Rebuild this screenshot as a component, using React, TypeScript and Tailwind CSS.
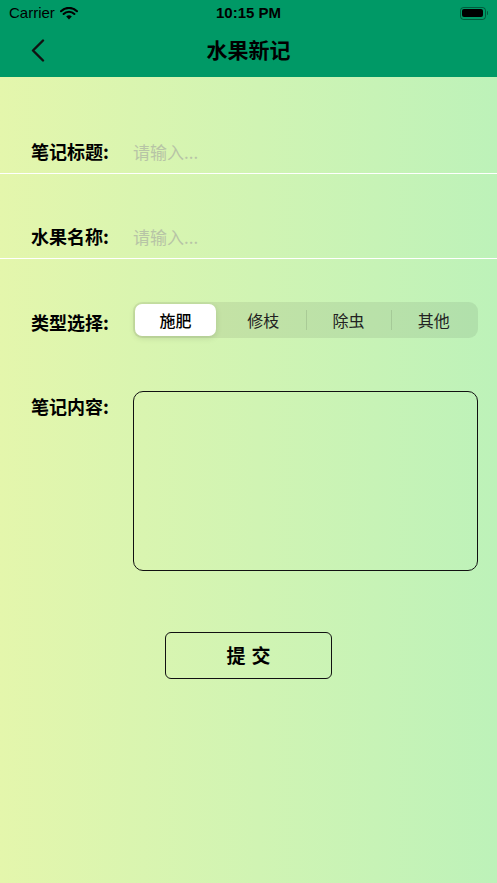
import { useState } from "react";

const types = ["施肥", "修枝", "除虫", "其他"];

function StatusBar() {
  return (
    <div className="relative flex h-[26px] items-center px-[9px] text-[15px] text-black">
      <div className="flex items-center gap-[5px]">
        <span className="font-['Liberation_Sans',sans-serif]">Carrier</span>
        <svg width="18" height="13" viewBox="0 0 18 13">
          <path d="M9 12.5 L6.2 9.6 A4 4 0 0 1 11.8 9.6 Z" fill="#000" />
          <path d="M3.6 7 A7.6 7.6 0 0 1 14.4 7" stroke="#000" strokeWidth="2.1" fill="none" strokeLinecap="round" />
          <path d="M1 4.2 A11.3 11.3 0 0 1 17 4.2" stroke="#000" strokeWidth="2.1" fill="none" strokeLinecap="round" />
        </svg>
      </div>
      <span className="absolute left-1/2 -translate-x-1/2 font-['Liberation_Sans',sans-serif] font-semibold">
        10:15 PM
      </span>
      <div className="ml-auto flex items-center gap-[1px]">
        <div className="flex h-[13px] w-[26px] items-center rounded-[3.5px] border border-black/40 p-[1.5px]">
          <div className="h-full w-full rounded-[2px] bg-black" />
        </div>
        <div className="h-[4px] w-[1.5px] rounded-r-sm bg-black/40" />
      </div>
    </div>
  );
}

export default function App() {
  const [active, setActive] = useState(0);

  return (
    <div className="min-h-screen w-full bg-linear-to-r from-[#e4f6ac] to-[#bdf2b9] font-['Noto_Sans_CJK_SC','Noto_Sans',sans-serif] text-black">
      <div className="relative h-[77px] bg-[#009966]">
        <StatusBar />
        <div className="flex h-[47px] items-center justify-center">
          <h1 className="text-[21px] font-semibold">水果新记</h1>
        </div>
        <button type="button" className="absolute left-[30px] top-[39px]" aria-label="Back">
          <svg width="16" height="24" viewBox="0 0 16 24">
            <path d="M13 1.5 L3 11.5 L13 21.5" stroke="#111" strokeWidth="2.4" fill="none" strokeLinecap="round" strokeLinejoin="round" />
          </svg>
        </button>
      </div>

      <div className="mt-[53px] flex h-[44px] items-center border-b border-white pl-[31px]">
        <span className="w-[102px] shrink-0 text-[18px] font-semibold">笔记标题:</span>
        <input
          type="text"
          placeholder="请输入..."
          className="w-full bg-transparent text-[17px] outline-none placeholder:text-[#b7c4a6]"
        />
      </div>

      <div className="mt-[41px] flex h-[44px] items-center border-b border-white pl-[31px]">
        <span className="w-[102px] shrink-0 text-[18px] font-semibold">水果名称:</span>
        <input
          type="text"
          placeholder="请输入..."
          className="w-full bg-transparent text-[17px] outline-none placeholder:text-[#b7c4a6]"
        />
      </div>

      <div className="mt-[43px] flex h-[36px] items-center pl-[31px] pr-[19px]">
        <span className="w-[102px] shrink-0 pt-[4px] text-[18px] font-semibold">类型选择:</span>
        <div className="flex h-full flex-1 items-center rounded-[9px] bg-black/[0.07] p-[2px]">
          {types.map((t, i) => (
            <div key={t} className="flex h-full flex-1 items-center">
              {i > 0 && (
                <div
                  className={
                    active === i || active === i - 1
                      ? "h-[20px] w-px bg-transparent"
                      : "h-[20px] w-px bg-black/10"
                  }
                />
              )}
              <button
                type="button"
                onClick={() => setActive(i)}
                className={
                  active === i
                    ? "mr-[4px] h-full flex-1 rounded-[7px] bg-white text-[16px] font-medium shadow-[0_2px_6px_rgba(0,0,0,0.12)]"
                    : "h-full flex-1 text-[16px] text-[#222]"
                }
              >
                {t}
              </button>
            </div>
          ))}
        </div>
      </div>

      <div className="mt-[53px] flex pl-[31px] pr-[19px]">
        <span className="w-[102px] shrink-0 pt-[2px] text-[18px] font-semibold">笔记内容:</span>
        <textarea className="h-[180px] flex-1 resize-none rounded-[10px] border-[1.5px] border-[#111] bg-transparent p-2 text-[16px] outline-none" />
      </div>

      <div className="mt-[61px] flex justify-center">
        <button
          type="button"
          className="h-[47px] w-[167px] rounded-[6px] border-[1.5px] border-[#111] text-[19px] font-semibold tracking-[6px] indent-[6px]"
        >
          提交
        </button>
      </div>
    </div>
  );
}
